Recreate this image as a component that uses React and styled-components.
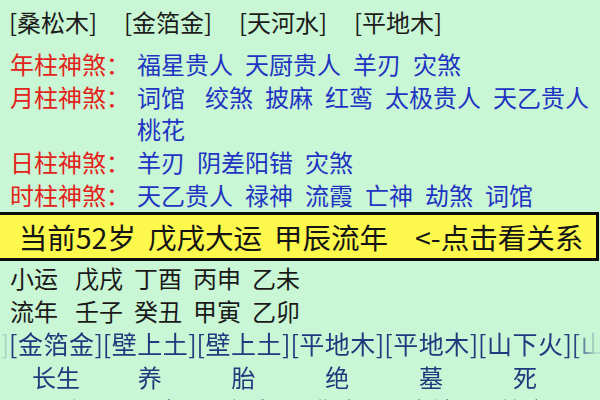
import styled, { createGlobalStyle } from 'styled-components';

const GlobalStyle = createGlobalStyle`
  html, body {
    margin: 0;
    padding: 0;
    background: #c9f6d4;
  }
  body {
    font-family: 'Noto Sans CJK SC', 'Noto Sans', sans-serif;
    overflow: hidden;
  }
`;

const nayin = ['[桑松木]', '[金箔金]', '[天河水]', '[平地木]'];

const shensha = [
  { label: '年柱神煞：', words: ['福星贵人', '天厨贵人', '羊刃', '灾煞'] },
  { label: '月柱神煞：', words: ['词馆', '绞煞', '披麻', '红鸾', '太极贵人', '天乙贵人', '桃花'], wide: true },
  { label: '日柱神煞：', words: ['羊刃', '阴差阳错', '灾煞'] },
  { label: '时柱神煞：', words: ['天乙贵人', '禄神', '流霞', '亡神', '劫煞', '词馆'] },
];

const luck = [
  { label: '小运', items: ['戊戌', '丁酉', '丙申', '乙未'] },
  { label: '流年', items: ['壬子', '癸丑', '甲寅', '乙卯'] },
];

// one column per year in the scrolled strip
const columns = [
  { ny: '[大林木]', stage: '帝旺', god: '正官' },
  { ny: '[金箔金]', stage: '长生', god: '七杀' },
  { ny: '[壁上土]', stage: '养', god: '正财' },
  { ny: '[壁上土]', stage: '胎', god: '偏财' },
  { ny: '[平地木]', stage: '绝', god: '伤官' },
  { ny: '[平地木]', stage: '墓', god: '食神' },
  { ny: '[山下火]', stage: '死', god: '比肩' },
  { ny: '[山下火]', stage: '病', god: '劫财' },
];

export default function App() {
  return (
    <Page>
      <GlobalStyle />
      <NayinRow>
        {nayin.map((n, i) => (
          <NayinItem key={i}>{n}</NayinItem>
        ))}
      </NayinRow>

      <ShaTable>
        {shensha.map((row) => (
          <ShaRow key={row.label}>
            <ShaLabel>{row.label}</ShaLabel>
            <ShaValues>
              {row.words.map((w, i) => (
                <ShaWord key={i} $extra={row.wide && i === 0}>{w}</ShaWord>
              ))}
            </ShaValues>
          </ShaRow>
        ))}
      </ShaTable>

      <Banner>
        <BannerPart>当前52岁</BannerPart>
        <BannerPart>戊戌大运</BannerPart>
        <BannerPart>甲辰流年</BannerPart>
        <BannerPart $gap={27}>&lt;-点击看关系</BannerPart>
      </Banner>

      {luck.map((row) => (
        <LuckRow key={row.label}>
          <LuckLabel>{row.label}</LuckLabel>
          {row.items.map((it, i) => (
            <LuckItem key={i}>{it}</LuckItem>
          ))}
        </LuckRow>
      ))}

      <Strip>
        <Track>
          {columns.map((c, i) => (
            <Column key={i}>
              <Cell $bracket>{c.ny}</Cell>
              <Cell>{c.stage}</Cell>
              <Cell>{c.god}</Cell>
            </Column>
          ))}
        </Track>
      </Strip>
    </Page>
  );
}

const Page = styled.div`
  width: 600px;
  height: 400px;
  overflow: hidden;
  background: #c9f6d4;
`;

const NayinRow = styled.div`
  display: flex;
  padding: 5px 0 0 9px;
  font-size: 24px;
  line-height: 34px;
  color: #1c1c1c;
`;

const NayinItem = styled.span`
  width: 115px;
  flex: none;
`;

const ShaTable = styled.div`
  display: flex;
  flex-direction: column;
  gap: 1px;
  margin-top: 9px;
  padding-left: 10px;
`;

const ShaRow = styled.div`
  display: grid;
  grid-template-columns: 120px 1fr;
  column-gap: 7px;
  font-size: 24px;
  line-height: 32px;
`;

const ShaLabel = styled.span`
  color: #e3221b;
  white-space: nowrap;
`;

const ShaValues = styled.div`
  display: flex;
  flex-wrap: wrap;
  column-gap: 12px;
  color: #1e34c2;
`;

const ShaWord = styled.span`
  margin-right: ${({ $extra }) => ($extra ? 8 : 0)}px;
  white-space: nowrap;
`;

const Banner = styled.div`
  display: flex;
  justify-content: center;
  align-items: center;
  height: 43px;
  margin: 1px 1px 0 0;
  padding-left: 6px;
  border: 3px solid #0d0d0d;
  border-left: none;
  background: #fdf84c;
  color: #141414;
  font-size: 28.5px;
  white-space: nowrap;
`;

const BannerPart = styled.span`
  margin-left: ${({ $gap }) => $gap ?? 12}px;
  &:first-child {
    margin-left: 0;
  }
`;

const LuckRow = styled.div`
  display: flex;
  gap: 11px;
  padding-left: 10px;
  font-size: 24px;
  line-height: 33px;
  color: #1a1a1a;
  &:first-of-type {
    margin-top: 4px;
  }
`;

const LuckLabel = styled.span`
  margin-right: 6px;
`;

const LuckItem = styled.span``;

const Strip = styled.div`
  overflow: hidden;
  -webkit-mask-image: linear-gradient(
    to right,
    rgba(0, 0, 0, 0.12) 0,
    rgba(0, 0, 0, 0.2) 7px,
    #000 10px,
    #000 574px,
    rgba(0, 0, 0, 0.1) 596px
  );
  mask-image: linear-gradient(
    to right,
    rgba(0, 0, 0, 0.12) 0,
    rgba(0, 0, 0, 0.2) 7px,
    #000 10px,
    #000 574px,
    rgba(0, 0, 0, 0.1) 596px
  );
`;

const Track = styled.div`
  display: flex;
  margin-left: -84.8px;
`;

const Column = styled.div`
  display: flex;
  flex-direction: column;
  width: 93.8px;
  flex: none;
`;

const Cell = styled.span`
  text-align: center;
  font-size: ${({ $bracket }) => ($bracket ? 25 : 24)}px;
  letter-spacing: ${({ $bracket }) => ($bracket ? 0.5 : 0)}px;
  line-height: 33px;
  color: #23397e;
  white-space: nowrap;
`;
